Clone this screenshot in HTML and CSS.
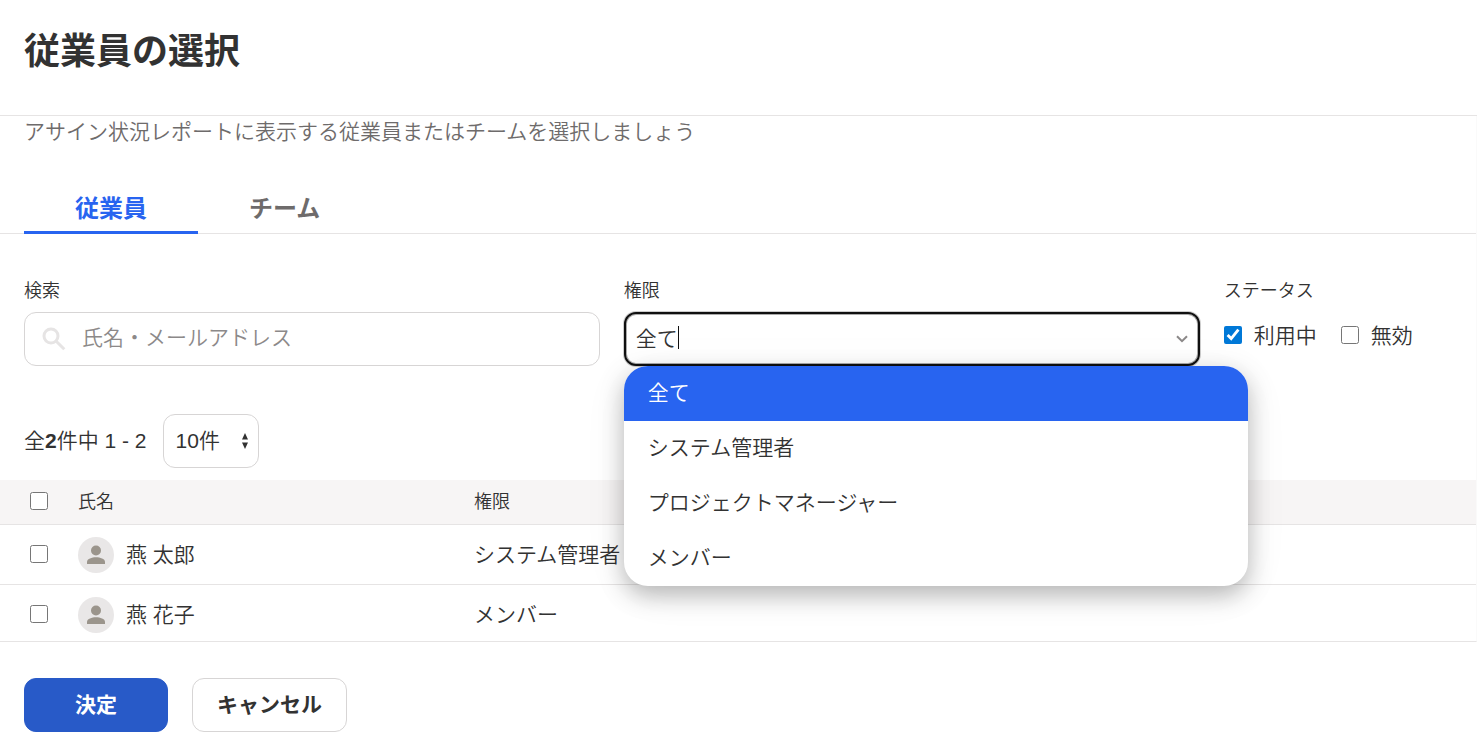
FILE: index.html
```html
<!DOCTYPE html>
<html lang="ja">
<head>
<meta charset="utf-8">
<meta name="viewport" content="width=device-width, initial-scale=1">
<title>従業員の選択</title>
<link rel="stylesheet" href="styles.css">
</head>
<body>
<header class="dialog-header">
  <h1 class="title">従業員の選択</h1>
</header>
<main class="dialog-body">
  <p class="lead">アサイン状況レポートに表示する従業員またはチームを選択しましょう</p>
  <div class="tabs" role="tablist">
    <button class="tab tab-active" type="button" role="tab" aria-selected="true">従業員</button>
    <button class="tab" type="button" role="tab" aria-selected="false">チーム</button>
  </div>

  <div class="filters">
    <div class="field">
      <label class="label" for="search">検索</label>
      <div class="control">
        <svg class="search-icon" viewBox="0 0 24 24" aria-hidden="true"><circle cx="9" cy="9" r="7"/><path d="M14.2 14.2L22.3 22.3"/></svg>
        <input class="input input-search" id="search" type="text" placeholder="氏名・メールアドレス">
      </div>
    </div>
    <div class="field">
      <label class="label" for="role">権限</label>
      <div class="control">
        <input class="input input-focused" id="role" type="text" value="全て" role="combobox" aria-expanded="true" aria-controls="role-menu">
        <span class="caret"></span>
        <svg class="chevron" viewBox="0 0 12 8" aria-hidden="true"><path d="M1 1.2L6 6.2L11 1.2"/></svg>
        <ul class="menu" id="role-menu" role="listbox">
          <li class="option option-active" role="option" aria-selected="true">全て</li>
          <li class="option" role="option" aria-selected="false">システム管理者</li>
          <li class="option" role="option" aria-selected="false">プロジェクトマネージャー</li>
          <li class="option" role="option" aria-selected="false">メンバー</li>
        </ul>
      </div>
    </div>
    <fieldset class="field status">
      <legend class="label">ステータス</legend>
      <div class="checks">
        <label class="check"><input class="box" type="checkbox" checked>利用中</label>
        <label class="check"><input class="box" type="checkbox">無効</label>
      </div>
    </fieldset>
  </div>

  <div class="pager">
    <span>全<b>2</b>件中 1 - 2</span>
    <div class="per-page">
      <select class="per-page-select" aria-label="表示件数"><option>10件</option></select>
      <svg class="sort-arrows" viewBox="0 0 6 16" aria-hidden="true"><path d="M3 0L6 6.500H0ZM3 16L0 9.500H6Z"/></svg>
    </div>
  </div>

  <table class="table">
    <thead>
      <tr><th class="col-check"><input class="box" type="checkbox" aria-label="全て選択"></th><th class="col-name">氏名</th><th>権限</th></tr>
    </thead>
    <tbody>
      <tr>
        <td class="col-check"><input class="box" type="checkbox" aria-label="燕 太郎"></td>
        <td><div class="person"><svg class="avatar" viewBox="0 0 36 36" aria-hidden="true"><circle class="avatar-bg" cx="18" cy="18" r="18"/><circle cx="18" cy="13.5" r="5"/><path d="M9 27v-2.2C9 21.800 14 20.300 18 20.300s9 1.500 9 4.500V27z"/></svg><span>燕 太郎</span></div></td>
        <td>システム管理者</td>
      </tr>
      <tr>
        <td class="col-check"><input class="box" type="checkbox" aria-label="燕 花子"></td>
        <td><div class="person"><svg class="avatar" viewBox="0 0 36 36" aria-hidden="true"><circle class="avatar-bg" cx="18" cy="18" r="18"/><circle cx="18" cy="13.5" r="5"/><path d="M9 27v-2.2C9 21.800 14 20.300 18 20.300s9 1.500 9 4.500V27z"/></svg><span>燕 花子</span></div></td>
        <td>メンバー</td>
      </tr>
    </tbody>
  </table>
</main>
<footer class="dialog-footer">
  <button class="button button-primary" type="button">決定</button>
  <button class="button" type="button">キャンセル</button>
</footer>
</body>
</html>
```
FILE: styles.css
```css
* { box-sizing: border-box; }

body {
  margin: 0;
  background: #fff;
  color: #323232;
  font-family: "Liberation Sans", "Noto Sans CJK JP", sans-serif;
  font-size: 21px;
  font-weight: 350;
  line-height: 32px;
}

b { font-weight: 700; }

input, select, button { font: inherit; color: inherit; }

.dialog-header {
  padding: 25px 24px 36px;
  border-bottom: 1px solid #e6e4e4;
}

.title {
  margin: 0;
  font-size: 36px;
  font-weight: 700;
  line-height: 54px;
}

.dialog-body {
  border-right: 1px solid #fafafa;
  border-bottom: 1px solid #e6e4e4;
}

.lead {
  margin: 0;
  padding: 0 24px;
  color: #6e6b6b;
}

.tabs {
  display: flex;
  margin-top: 34px;
  padding: 0 24px;
  box-shadow: inset 0 -1px #e6e4e4;
}

.tab {
  padding: 9px 51px 4px;
  border: 0;
  border-bottom: 3px solid transparent;
  background: none;
  color: #6e6b6b;
  font-size: 24px;
  font-weight: 700;
  line-height: 36px;
}

.tab-active {
  border-bottom-color: #2864f0;
  color: #2864f0;
}

.filters {
  display: grid;
  grid-template-columns: minmax(0, 5fr) minmax(0, 5fr) minmax(0, 2fr);
  gap: 24px;
  padding: 43px 22px 0 24px;
}

.field { min-width: 0; }

.label {
  display: block;
  margin-bottom: 7px;
  padding: 0;
  font-size: 18px;
  line-height: 28px;
}

.control { position: relative; }

.input {
  display: block;
  width: 100%;
  height: 54px;
  padding: 0 12px 2px;
  border: 1px solid #d7d5d5;
  border-radius: 12px;
  background: #fff;
  outline: 0;
}

.input::placeholder { color: #8c8989; opacity: 1; }

.input-search { padding-left: 57px; }

.input-focused {
  padding: 0 10px 5px;
  border: 2px solid #101010;
  box-shadow: inset 0 0 0 1px #aaa, 0 0 0 1px #ccc;
}

.search-icon {
  position: absolute;
  top: 15px;
  left: 18px;
  width: 24px;
  height: 24px;
  fill: none;
  stroke: #e6e4e4;
  stroke-width: 3;
}

.caret {
  position: absolute;
  top: 14px;
  left: 54px;
  width: 1px;
  height: 23px;
  background: #101010;
}

.chevron {
  position: absolute;
  top: 23px;
  right: 12px;
  width: 12px;
  height: 8px;
  fill: none;
  stroke: #8c8989;
  stroke-width: 2;
}

.menu {
  position: absolute;
  z-index: 1;
  top: 54px;
  left: 0;
  width: 624px;
  margin: 0;
  padding: 0;
  overflow: hidden;
  list-style: none;
  border-radius: 24px;
  background: #fff;
  box-shadow: 0 9px 24px rgba(0, 0, 0, .28), 0 6px 54px rgba(0, 0, 0, .04);
}

.option {
  padding: 11px 24px 12px;
}

.option-active {
  background: #2864f0;
  color: #fff;
}

.status {
  margin: 0;
  padding: 0;
  border: 0;
}

.checks {
  display: flex;
  gap: 24px;
  line-height: 48px;
}

.check {
  display: flex;
  align-items: center;
  gap: 12px;
  white-space: nowrap;
}

.box {
  display: block;
  width: 18px;
  height: 18px;
  margin: 0 0 2px;
  accent-color: #0078d7;
}

.pager {
  display: flex;
  align-items: center;
  gap: 16px;
  padding: 48px 24px 12px;
}

.per-page { position: relative; }

.per-page-select {
  display: block;
  width: 96px;
  height: 54px;
  padding: 0 12px;
  border: 1px solid #d7d5d5;
  border-radius: 12px;
  background: #fff;
  appearance: none;
}

.sort-arrows {
  position: absolute;
  top: 19px;
  right: 11px;
  width: 6px;
  height: 16px;
  fill: #323232;
}

.table {
  width: 100%;
  border-collapse: separate;
  border-spacing: 0;
  table-layout: fixed;
}

.table th,
.table td {
  padding: 12px 0 11px;
  border-bottom: 1px solid #e6e4e4;
  text-align: left;
  vertical-align: middle;
}

.table th {
  padding: 8px 0;
  background: #f7f5f5;
  font-size: 18px;
  font-weight: 350;
  line-height: 28px;
}

.table tbody tr:last-child td {
  padding-bottom: 8px;
  border-bottom: 0;
}

.table .col-check {
  width: 78px;
  padding-left: 30px;
}

.col-name { width: 396px; }

.person {
  display: flex;
  align-items: center;
  gap: 12px;
}

.avatar {
  width: 36px;
  height: 36px;
  fill: #9b958c;
}

.avatar-bg { fill: #e9e7e7; }

.dialog-footer {
  display: flex;
  gap: 24px;
  padding: 36px 24px 22px;
}

.button {
  height: 54px;
  padding: 0 24px 1px;
  border: 1px solid #d7d5d5;
  border-radius: 12px;
  background: #fff;
  font-weight: 700;
}

.button-primary {
  padding: 0 50px 1px;
  border-color: #285ac8;
  background: #285ac8;
  color: #fff;
}
```
